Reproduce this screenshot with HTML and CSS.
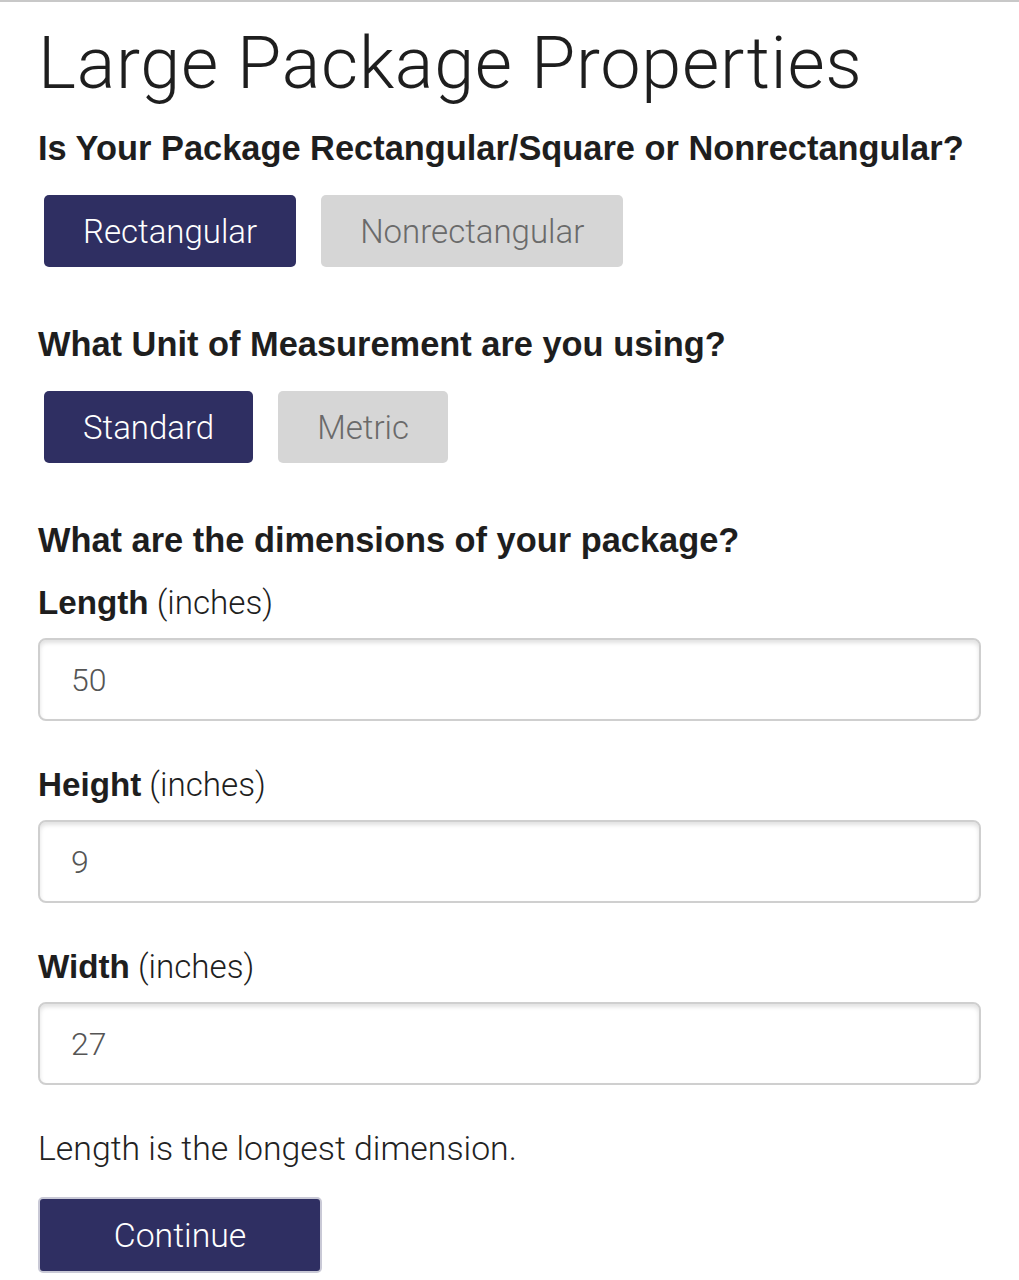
FILE: index.html
```html
<!DOCTYPE html>
<html lang="en">
<head>
    <meta charset="UTF-8">
    <meta name="viewport" content="width=device-width, initial-scale=1.0">
    <title>Large Package Properties</title>
    <link rel="stylesheet" href="styles.css">
</head>
<body>
    <div class="page">
        <h1>Large Package Properties</h1>

        <h2>Is Your Package Rectangular/Square or Nonrectangular?</h2>
        <div class="choices">
            <button class="choice selected">Rectangular</button>
            <button class="choice">Nonrectangular</button>
        </div>

        <h2>What Unit of Measurement are you using?</h2>
        <div class="choices">
            <button class="choice selected">Standard</button>
            <button class="choice">Metric</button>
        </div>

        <h2 class="dims-title">What are the dimensions of your package?</h2>
        <div class="field">
            <label for="length"><b>Length</b> (inches)</label>
            <input id="length" type="text" value="50">
        </div>
        <div class="field">
            <label for="height"><b>Height</b> (inches)</label>
            <input id="height" type="text" value="9">
        </div>
        <div class="field">
            <label for="width"><b>Width</b> (inches)</label>
            <input id="width" type="text" value="27">
        </div>

        <p class="note">Length is the longest dimension.</p>
        <button class="continue">Continue</button>
    </div>
</body>
</html>
```

FILE: styles.css
```css
body, html {
    margin: 0;
    padding: 0;
    background: #fff;
    font-family: Roboto, "Liberation Sans", Arial, sans-serif;
    font-weight: 300;
    color: #222;
}
.page {
    border-top: 2px solid #c8c8c8;
    padding: 0 38px 0 38px;
}
h1 {
    font-size: 72px;
    font-weight: 300;
    letter-spacing: 0.7px;
    margin: 22px 0 0 0;
    line-height: 80px;
    color: #1e1e1e;
}
h2 {
    font-family: "Liberation Sans", Arial, sans-serif;
    font-size: 34.4px;
    font-weight: bold;
    margin: 0;
    line-height: 40px;
    color: #1e1e1e;
}
h1 + h2 {
    margin-top: 24px;
}
.choices {
    display: flex;
    gap: 25px;
    margin: 27px 0 57px 6px;
}
.choice {
    height: 72px;
    padding: 0 39px;
    border: none;
    border-radius: 5px;
    background: #d6d6d6;
    color: #6a6a6a;
    font-family: inherit;
    font-weight: 300;
    font-size: 33px;
}
.choice.selected {
    background: #2f2f62;
    color: #fff;
}
.field {
    margin-top: 25px;
}
.field + .field {
    margin-top: 46px;
}
label {
    display: block;
    font-size: 33.2px;
    line-height: 36px;
    color: #1e1e1e;
    margin-bottom: 17px;
}
label b {
    font-family: "Liberation Sans", Arial, sans-serif;
    font-weight: bold;
}
input {
    display: block;
    box-sizing: border-box;
    width: 100%;
    height: 83px;
    padding: 0 31px;
    border: 2px solid #cfcfcf;
    border-radius: 8px;
    box-shadow: inset 0 3px 4px rgba(0, 0, 0, 0.12);
    font-family: inherit;
    font-weight: 300;
    font-size: 32px;
    color: #555;
    outline: none;
}
.note {
    font-size: 33.8px;
    margin: 44px 0 0 0;
    line-height: 40px;
    color: #222;
}
.continue {
    display: block;
    width: 284px;
    height: 76px;
    margin-top: 28px;
    border: 2px solid #c9c9d6;
    border-radius: 5px;
    background: #2f2f62;
    color: #fff;
    font-family: inherit;
    font-weight: 300;
    font-size: 33.8px;
}
```
